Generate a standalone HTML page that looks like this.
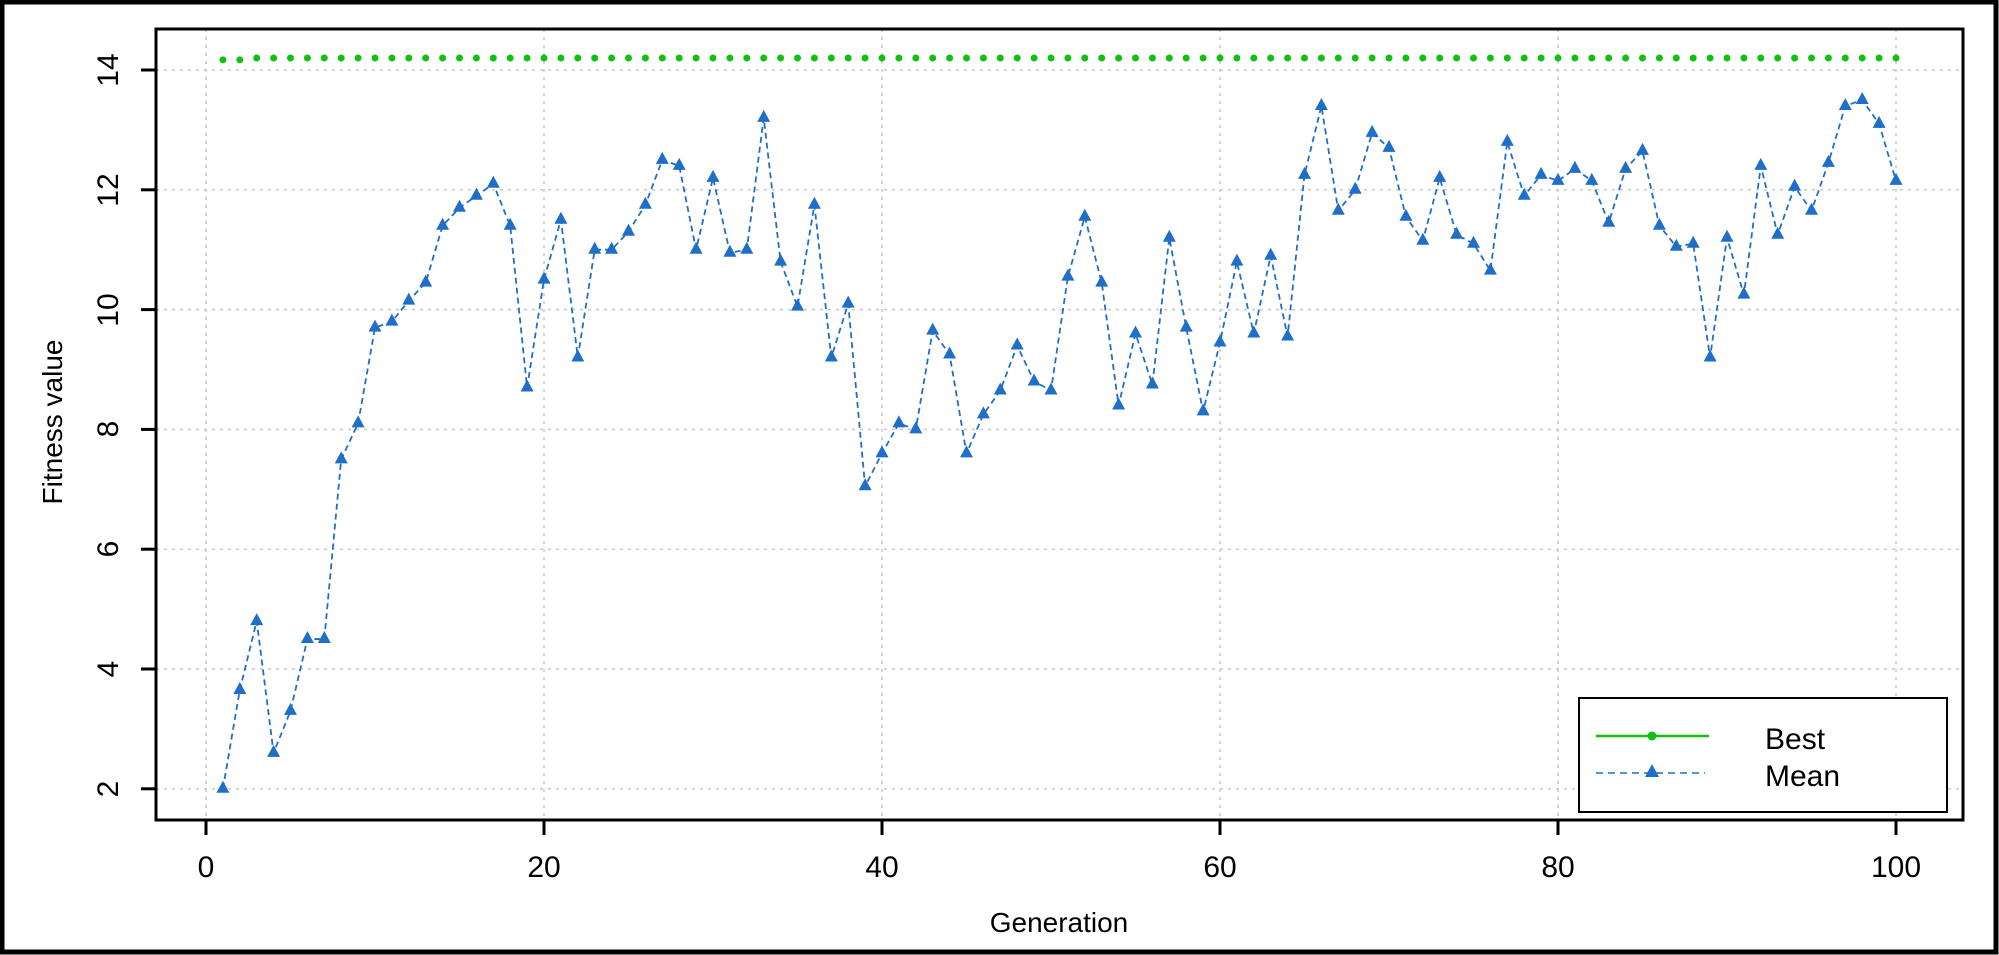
<!DOCTYPE html>
<html><head><meta charset="utf-8"><style>
html,body{margin:0;padding:0;background:#fff;}
svg{display:block;}
text{font-family:"Liberation Sans",sans-serif;fill:#000;}
</style></head><body>
<svg id="s" width="1999" height="955" viewBox="0 0 1999 955" xmlns="http://www.w3.org/2000/svg">
<rect x="0" y="0" width="1999" height="955" fill="#fff"/>
<rect x="2" y="2" width="1994" height="950" fill="none" stroke="#000" stroke-width="5"/>
<g id="grid" stroke="#c8c8c8" stroke-width="1.5" stroke-dasharray="3,5"></g>
<g id="data"></g>
<rect x="156" y="29" width="1807" height="791" fill="none" stroke="#000" stroke-width="3"/>
<g id="ticks" stroke="#000" stroke-width="3"></g>
<g font-size="30" text-anchor="middle">
<text x="206" y="877">0</text>
<text x="544" y="877">20</text>
<text x="882" y="877">40</text>
<text x="1220" y="877">60</text>
<text x="1558" y="877">80</text>
<text x="1896" y="877">100</text>
<text x="0" y="0" transform="translate(118,789) rotate(-90)">2</text>
<text x="0" y="0" transform="translate(118,669) rotate(-90)">4</text>
<text x="0" y="0" transform="translate(118,549) rotate(-90)">6</text>
<text x="0" y="0" transform="translate(118,429) rotate(-90)">8</text>
<text x="0" y="0" transform="translate(118,310) rotate(-90)">10</text>
<text x="0" y="0" transform="translate(118,190) rotate(-90)">12</text>
<text x="0" y="0" transform="translate(118,70) rotate(-90)">14</text>
<text x="1059" y="932" font-size="28">Generation</text>
<text x="0" y="0" font-size="28" transform="translate(62,422) rotate(-90)">Fitness value</text>
</g>
<rect x="1579" y="698" width="368" height="114" fill="#fff" stroke="#000" stroke-width="2"/>
<line x1="1596" y1="736" x2="1709" y2="736" stroke="#11c011" stroke-width="2.5"/>
<circle cx="1652" cy="736" r="4.5" fill="#11c011"/>
<line x1="1596" y1="773" x2="1705" y2="773" stroke="#1f6fc8" stroke-width="1.5" stroke-dasharray="7,5"/>
<polygon points="1652,764 1645,777 1659,777" fill="#1f6fc8"/>
<text x="1765" y="749" font-size="30">Best</text>
<text x="1765" y="786" font-size="30">Mean</text>
</svg>
<script>
var ns="http://www.w3.org/2000/svg";
function X(g){return 206+16.9*g;}
function Y(v){return 70+(14-v)*59.9;}
var grid=document.getElementById('grid'),ticks=document.getElementById('ticks'),data=document.getElementById('data');
function el(p,tag,a){var e=document.createElementNS(ns,tag);for(var k in a)e.setAttribute(k,a[k]);p.appendChild(e);return e;}
for(var g=0;g<=100;g+=20){el(grid,'line',{x1:X(g),y1:29,x2:X(g),y2:820});el(ticks,'line',{x1:X(g),y1:820,x2:X(g),y2:835});}
for(var v=2;v<=14;v+=2){el(grid,'line',{x1:156,y1:Y(v),x2:1963,y2:Y(v)});el(ticks,'line',{x1:141,y1:Y(v),x2:156,y2:Y(v)});}
var m=[2.0,3.65,4.8,2.6,3.3,4.5,4.5,7.5,8.1,9.7,9.8,10.15,10.45,11.4,11.7,11.9,12.1,11.4,8.7,10.5,11.5,9.2,11.0,11.0,11.3,11.75,12.5,12.4,11.0,12.2,10.95,11.0,13.2,10.8,10.05,11.75,9.2,10.1,7.05,7.6,8.1,8.0,9.65,9.25,7.6,8.25,8.65,9.4,8.8,8.65,10.55,11.55,10.45,8.4,9.6,8.75,11.2,9.7,8.3,9.45,10.8,9.6,10.9,9.55,12.25,13.4,11.65,12.0,12.95,12.7,11.55,11.15,12.2,11.25,11.1,10.65,12.8,11.9,12.25,12.15,12.35,12.15,11.45,12.35,12.65,11.4,11.05,11.1,9.2,11.2,10.25,12.4,11.25,12.05,11.65,12.45,13.4,13.5,13.1,12.15];
var pts=m.map(function(v,i){return X(i+1)+','+Y(v);}).join(' ');
el(data,'polyline',{points:pts,fill:'none',stroke:'#1f6fc8','stroke-width':1.8,'stroke-dasharray':'6,4'});
m.forEach(function(v,i){var x=X(i+1),y=Y(v);el(data,'polygon',{points:(x)+','+(y-8)+' '+(x-6.5)+','+(y+4)+' '+(x+6.5)+','+(y+4),fill:'#1f6fc8'});});
for(var i=1;i<=100;i++){var bv=i<=2?14.17:14.2;el(data,'circle',{cx:X(i),cy:Y(bv),r:3.5,fill:'#11c011'});}
</script>
</body></html>
